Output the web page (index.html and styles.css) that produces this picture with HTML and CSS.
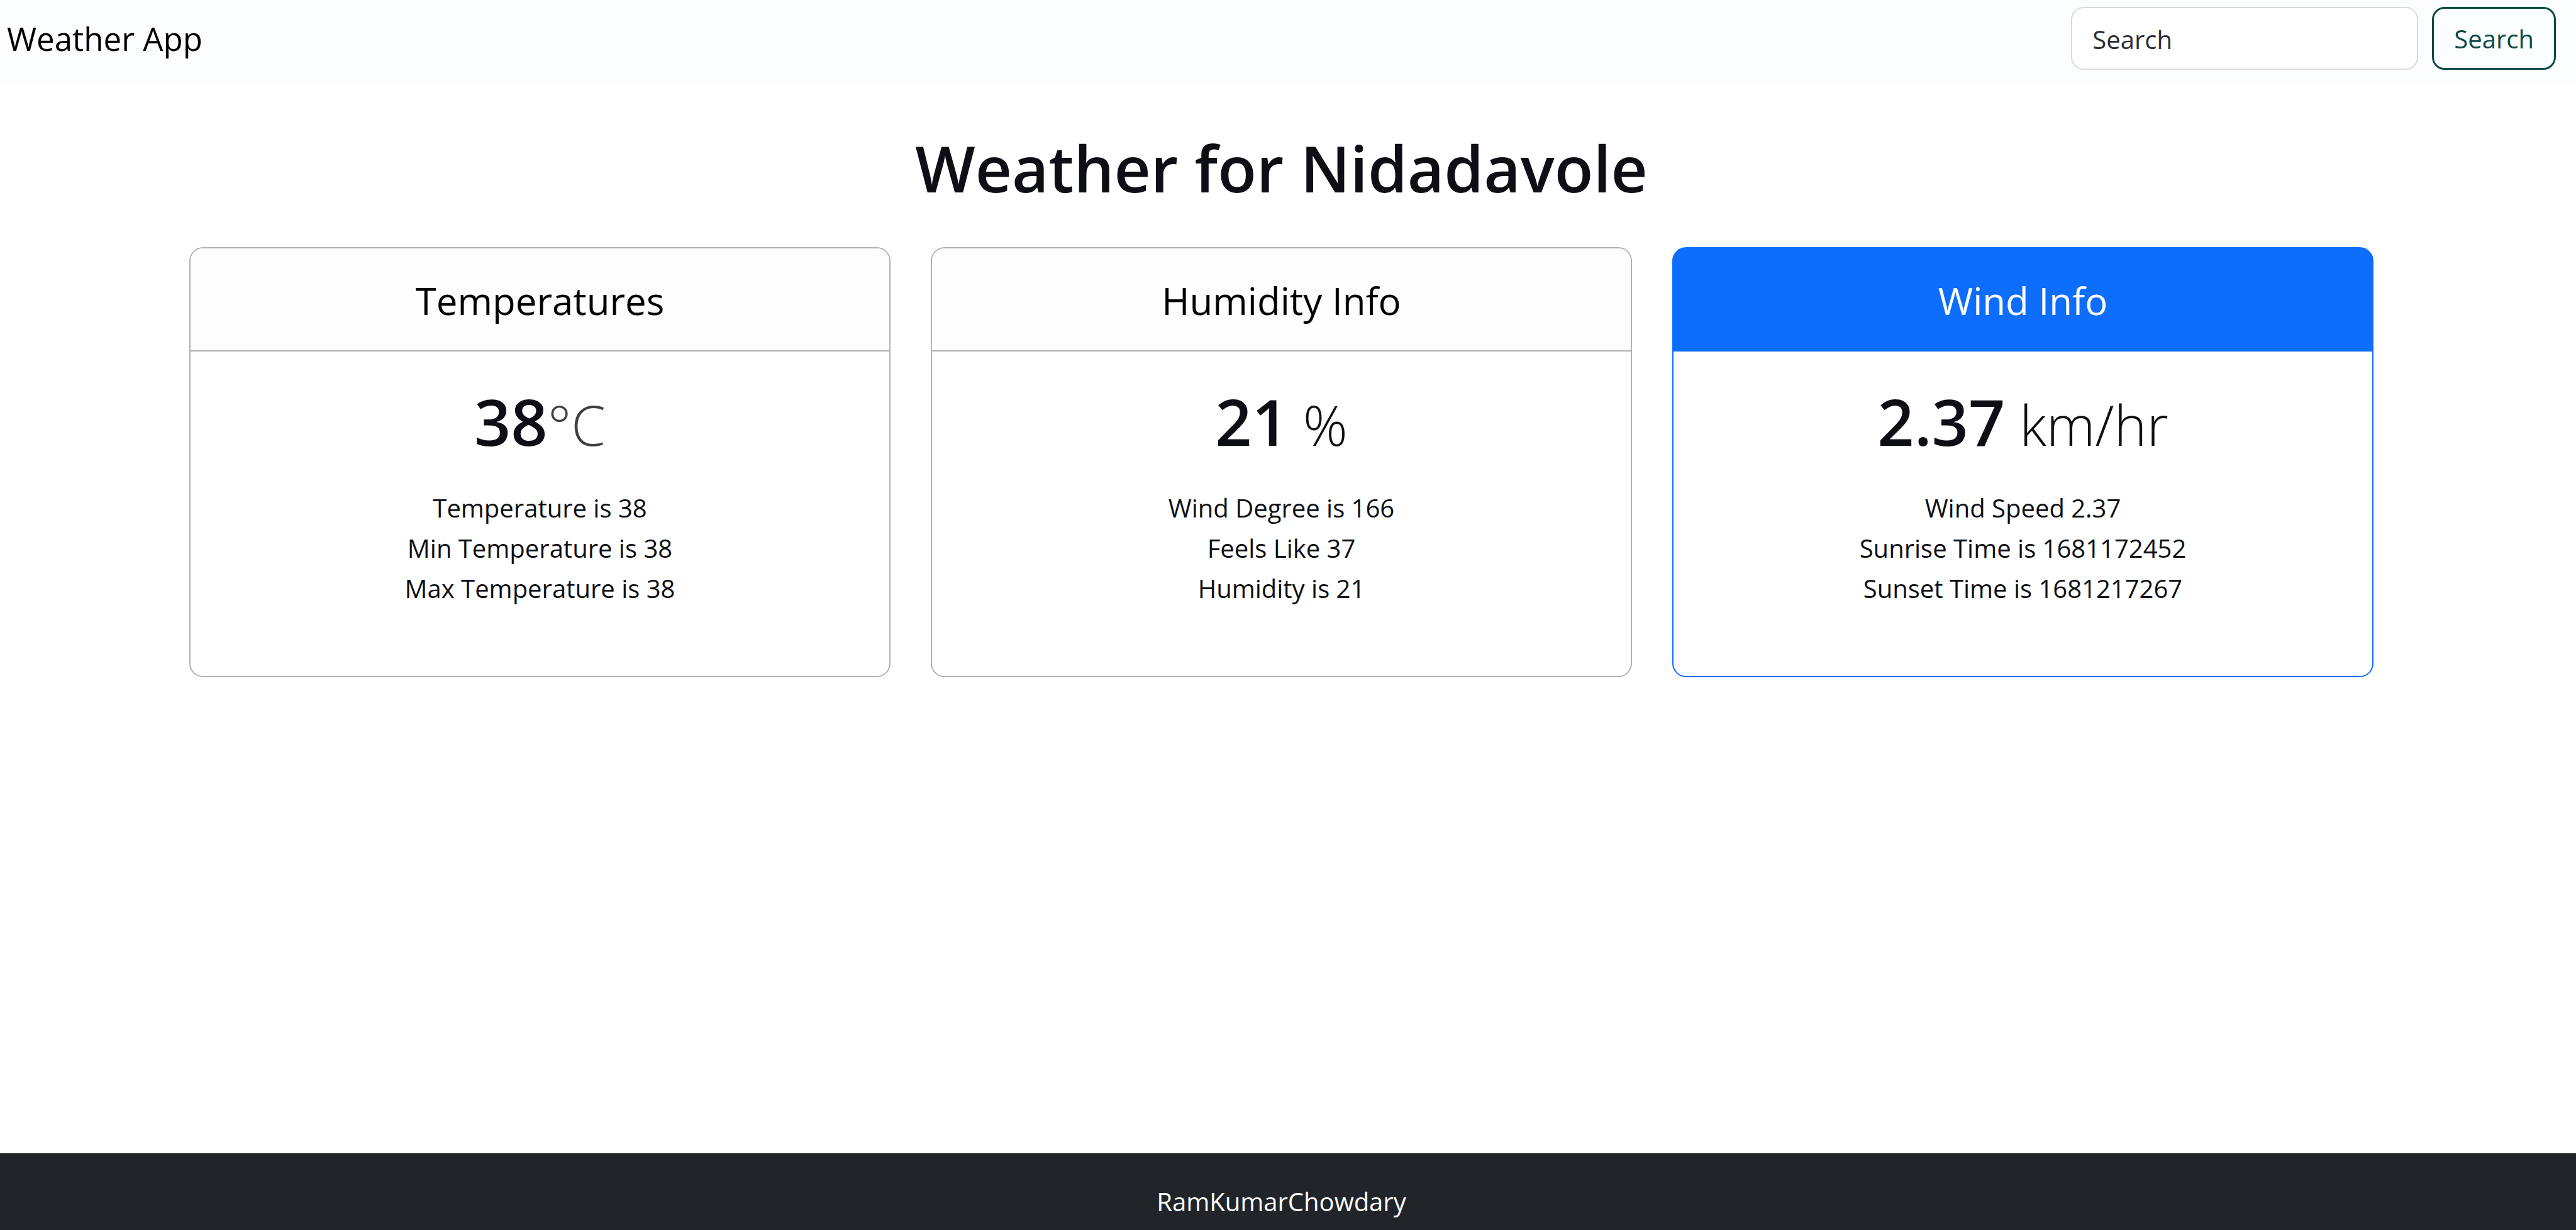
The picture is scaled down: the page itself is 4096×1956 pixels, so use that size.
FILE: index.html
```html
<!DOCTYPE html>
<html lang="en">
<head>
<meta charset="utf-8">
<title>Weather App</title>
<link rel="stylesheet" href="styles.css">
</head>
<body>
<header class="navbar">
  <a class="brand" href="#">Weather App</a>
  <form class="search" role="search">
    <input class="search-input" type="search" placeholder="Search" aria-label="Search">
    <button class="search-button" type="submit">Search</button>
  </form>
</header>
<main class="content">
  <h1 class="title">Weather for Nidadavole</h1>
  <div class="cards">
    <section class="card">
      <h2 class="card-header">Temperatures</h2>
      <div class="card-body">
        <p class="value">38<small class="unit unit-muted">°C</small></p>
        <ul class="details">
          <li>Temperature is 38</li>
          <li>Min Temperature is 38</li>
          <li>Max Temperature is 38</li>
        </ul>
      </div>
    </section>
    <section class="card">
      <h2 class="card-header">Humidity Info</h2>
      <div class="card-body">
        <p class="value">21<small class="unit"> %</small></p>
        <ul class="details">
          <li>Wind Degree is 166</li>
          <li>Feels Like 37</li>
          <li>Humidity is 21</li>
        </ul>
      </div>
    </section>
    <section class="card card-primary">
      <h2 class="card-header">Wind Info</h2>
      <div class="card-body">
        <p class="value">2.37<small class="unit"> km/hr</small></p>
        <ul class="details">
          <li>Wind Speed 2.37</li>
          <li>Sunrise Time is 1681172452</li>
          <li>Sunset Time is 1681217267</li>
        </ul>
      </div>
    </section>
  </div>
</main>
<footer class="footer">RamKumarChowdary</footer>
</body>
</html>
```

FILE: styles.css
```css
* {
  box-sizing: border-box;
}

body {
  display: flex;
  flex-direction: column;
  min-height: 100vh;
  margin: 0;
  background: #fff;
  color: #0d0f14;
  font-family: "Open Sans", "Noto Sans", sans-serif;
  font-size: 40px;
  line-height: 64px;
}

.navbar {
  display: flex;
  align-items: flex-start;
  justify-content: space-between;
  padding: 11px 32px 22px 11px;
  background: #fcfdfe;
}

.brand {
  padding-top: 10px;
  color: #000;
  font-size: 51px;
  line-height: 80px;
  text-decoration: none;
}

.search {
  display: flex;
  gap: 22px;
}

.search-input,
.search-button {
  height: 100px;
  padding: 2px 32px 0;
  border-radius: 20px;
  font: inherit;
}

.search-input {
  width: 552px;
  border: 2px solid #d9dbde;
  background: #fff;
  color: #212529;
}

.search-input::placeholder {
  color: #2c2e36;
  opacity: 1;
}

.search-button {
  border: 3px solid #0b4a47;
  background: transparent;
  color: #0b4a47;
}

.content {
  flex: 1;
  padding: 66px 322px 64px 301px;
  text-align: center;
}

.title {
  margin: 0 0 58px;
  font-size: 101px;
  font-weight: 600;
  line-height: 136px;
}

.cards {
  display: grid;
  grid-template-columns: repeat(3, 1fr);
  gap: 64px;
}

.card {
  overflow: hidden;
  border: 2px solid #b4b0b2;
  border-radius: 22px;
}

.card-header {
  margin: 0;
  padding: 42px 40px 38px;
  border-bottom: 2px solid #b4b0b2;
  background: #fdfdfd;
  color: #000;
  font-size: 60px;
  font-weight: 400;
  line-height: 82px;
}

.card-body {
  padding: 43px 43px 107px;
}

.value {
  margin: 0;
  font-size: 102px;
  font-weight: 600;
  line-height: 136px;
}

.unit {
  font-size: 88px;
  font-weight: 300;
}

.unit-muted {
  color: #3f3f48;
}

.details {
  margin: 33px 0 0;
  padding: 0;
  list-style: none;
}

.card-primary {
  border-color: #0d6efd;
  background: #0d6efd;
}

.card-primary .card-header {
  border-color: #0d6efd;
  background: #0d6efd;
  color: #fff;
}

.card-primary .card-body {
  background: #fff;
}

.footer {
  padding: 45px 21px 13px 0;
  background: #212529;
  color: #fff;
  text-align: center;
}
```
